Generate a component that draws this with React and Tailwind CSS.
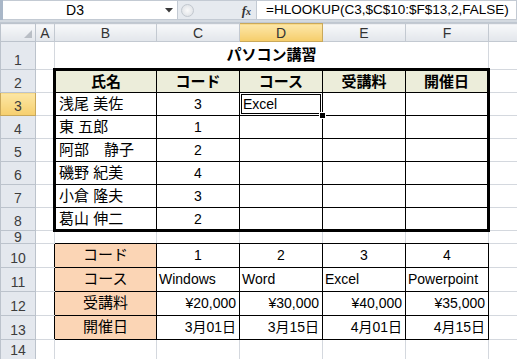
import React from "react";

const G = "border border-[#d4d8de] p-0";
const RH = "border border-[#bcc3cc] bg-[#e4e8ee] text-[#3d3d3d] text-[14px] text-center align-bottom pb-[2px] leading-[14px] p-0 font-normal";
const RHS = "border border-[#c9a85a] bg-linear-to-b from-[#fce6a4] to-[#f6cf6d] text-[#3d3d3d] text-[14px] text-center align-bottom pb-[2px] leading-[14px] p-0 font-normal";

function RowHead({ n, sel }) {
  return <td className={sel ? RHS : RH}>{n}</td>;
}

const names = [
  ["浅尾 美佐", "3"],
  ["東 五郎", "1"],
  ["阿部　静子", "2"],
  ["磯野 紀美", "4"],
  ["小倉 隆夫", "3"],
  ["葛山 伸二", "2"],
];

export default function App() {
  return (
    <div className="w-[517px] h-[359px] overflow-hidden bg-white font-['Liberation_Sans','Noto_Sans_CJK_JP',sans-serif] text-black">
      {/* formula bar */}
      <div className="flex h-[20px] bg-[#e6eaef]">
        <div className="w-[3px] bg-[#a9b7c8]" />
        <div className="w-[175px] bg-white border-y border-r border-[#c3cad3] flex items-center">
          <span className="flex-1 text-center text-[14px] leading-none pr-[22px] pl-[4px]">D3</span>
          <svg width="8" height="5" viewBox="0 0 8 5" className="mr-[4px]">
            <path d="M0 0 L8 0 L4 4.5 Z" fill="#3a3a3a" />
          </svg>
        </div>
        <div className="w-[78px] flex items-center border-y border-[#c3cad3]">
          <div className="ml-[3px] w-[13px] h-[13px] rounded-full border border-[#c2c8cf] bg-radial from-[#fafafa] to-[#d9dde2]" />
          <div className="flex-1" />
          <span className="font-['Liberation_Serif',serif] italic font-bold text-[13px] leading-none text-[#333] mr-[5px]">
            f<span className="text-[10px]">x</span>
          </span>
        </div>
        <div className="flex-1 bg-white border border-[#c3cad3] flex items-center pl-[9px]">
          <span className="text-[13.5px] leading-none whitespace-nowrap">=HLOOKUP(C3,$C$10:$F$13,2,FALSE)</span>
        </div>
      </div>
      <div className="h-[3px] bg-[#d3d9e0] border-b border-[#bfc7d1]" />

      <table className="table-fixed border-collapse w-[517px]">
        <colgroup>
          <col className="w-[35px]" />
          <col className="w-[19px]" />
          <col className="w-[102px]" />
          <col className="w-[83px]" />
          <col className="w-[83px]" />
          <col className="w-[83px]" />
          <col className="w-[83px]" />
          <col className="w-[29px]" />
        </colgroup>
        <tbody>
          <tr className="h-[18px]">
            <td className="relative border border-[#bcc3cc] bg-linear-to-b from-[#f7f8fa] to-[#e2e6eb] p-0">
              <svg width="8" height="8" viewBox="0 0 8 8" className="absolute right-[3px] bottom-[3px]">
                <path d="M8 0 L8 8 L0 8 Z" fill="#b9bec5" />
              </svg>
            </td>
            {["A", "B", "C", "D", "E", "F", ""].map((c) => (
              <td
                key={c + "h"}
                className={
                  c === "D"
                    ? "border border-[#c9a85a] bg-linear-to-b from-[#fde7a8] to-[#f5cd69] text-[#333] text-[14px] leading-[14px] text-center p-0"
                    : "border border-[#c3c9d1] bg-linear-to-b from-[#f7f8fa] to-[#e2e6eb] text-[#333] text-[14px] leading-[14px] text-center p-0"
                }
              >
                {c}
              </td>
            ))}
          </tr>

          <tr className="h-[28px]">
            <RowHead n="1" />
            <td className={G} />
            <td colSpan={5} className="border border-[#d4d8de] p-0 text-center align-bottom pb-[5px] font-bold text-[15px] leading-[16px]">
              パソコン講習
            </td>
            <td className={G} />
          </tr>

          <tr className="h-[23px]">
            <RowHead n="2" />
            <td className={G} />
            <td className="border border-black border-t-[3px] border-l-[3px] bg-[#ecedda] font-bold text-[15px] text-center p-0 leading-[16px]">氏名</td>
            <td className="border border-black border-t-[3px] bg-[#ecedda] font-bold text-[15px] text-center p-0 leading-[16px]">コード</td>
            <td className="border border-black border-t-[3px] bg-[#ecedda] font-bold text-[15px] text-center p-0 leading-[16px]">コース</td>
            <td className="border border-black border-t-[3px] bg-[#ecedda] font-bold text-[15px] text-center p-0 leading-[16px]">受講料</td>
            <td className="border border-black border-t-[3px] border-r-[3px] bg-[#ecedda] font-bold text-[15px] text-center p-0 leading-[16px]">開催日</td>
            <td className={G} />
          </tr>

          {names.map(([nm, cd], i) => {
            const last = i === names.length - 1;
            const r = i + 3;
            return (
              <tr key={nm} className="h-[23px]">
                <RowHead n={String(r)} sel={r === 3} />
                <td className={G} />
                <td className={last ? "border border-black border-l-[3px] border-b-[3px] p-0 pl-[3px] text-[15px] leading-[16px] text-left whitespace-nowrap" : "border border-black border-l-[3px] p-0 pl-[3px] text-[15px] leading-[16px] text-left whitespace-nowrap"}>
                  {nm}
                </td>
                <td className={last ? "border border-black border-b-[3px] p-0 text-[14px] leading-[16px] text-center" : "border border-black p-0 text-[14px] leading-[16px] text-center"}>
                  {cd}
                </td>
                {r === 3 ? (
                  <td className="relative border border-black p-0 pl-[3px] text-[14px] leading-[16px] text-left shadow-[inset_0_0_0_1px_#fff,inset_0_0_0_2px_#000]">
                    Excel
                    <span className="absolute right-[-4px] bottom-[-4px] w-[7px] h-[7px] bg-black border border-white" />
                  </td>
                ) : (
                  <td className={last ? "border border-black border-b-[3px] p-0" : "border border-black p-0"} />
                )}
                <td className={last ? "border border-black border-b-[3px] p-0" : "border border-black p-0"} />
                <td className={last ? "border border-black border-b-[3px] border-r-[3px] p-0" : "border border-black border-r-[3px] p-0"} />
                <td className={G} />
              </tr>
            );
          })}

          <tr className="h-[13px]">
            <td className="border border-[#bcc3cc] bg-[#e4e8ee] text-[#3d3d3d] text-[14px] text-center align-bottom leading-[12px] p-0 overflow-hidden">9</td>
            <td className={G} />
            <td className="border border-[#d4d8de] border-b-black p-0" />
            <td className="border border-[#d4d8de] border-b-black p-0" />
            <td className="border border-[#d4d8de] border-b-black p-0" />
            <td className="border border-[#d4d8de] border-b-black p-0" />
            <td className="border border-[#d4d8de] border-b-black p-0" />
            <td className={G} />
          </tr>

          {[
            ["コード", ["1", "2", "3", "4"], "text-center"],
            ["コース", ["Windows", "Word", "Excel", "Powerpoint"], "text-left pl-[2px]"],
            ["受講料", ["¥20,000", "¥30,000", "¥40,000", "¥35,000"], "text-right pr-[3px]"],
            ["開催日", ["3月01日", "3月15日", "4月01日", "4月15日"], "text-right pr-[3px]"],
          ].map(([label, vals, al], i) => (
            <tr key={label} className="h-[24px]">
              <RowHead n={String(10 + i)} />
              <td className="border border-[#d4d8de] border-r-black p-0" />
              <td className="border border-black bg-[#fbd5b5] p-0 text-center align-bottom pb-[4px] text-[15px] leading-[16px]">{label}</td>
              {vals.map((v) => (
                <td key={v} className={"border border-black p-0 align-bottom pb-[4px] text-[14px] leading-[16px] whitespace-nowrap " + al}>
                  {v}
                </td>
              ))}
              <td className={G} />
            </tr>
          ))}

          <tr className="h-[20px]">
            <RowHead n="14" />
            <td className={G} />
            <td className={G} />
            <td className={G} />
            <td className={G} />
            <td className={G} />
            <td className={G} />
            <td className={G} />
          </tr>
        </tbody>
      </table>
    </div>
  );
}
